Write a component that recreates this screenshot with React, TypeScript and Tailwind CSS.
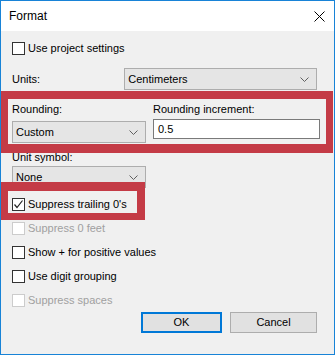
import React from "react";

const font = { fontFamily: '"Liberation Sans", Arial, sans-serif' };

function Chevron() {
  return (
    <svg width="9" height="5" viewBox="0 0 9 5" className="shrink-0">
      <polyline points="0.5,0.5 4.5,4.5 8.5,0.5" fill="none" stroke="#606060" strokeWidth="1" />
    </svg>
  );
}

function Select({ value, w }: { value: string; w: string }) {
  return (
    <div className={`${w} h-[22px] border border-[#adadad] bg-[#e5e5e5] flex items-center justify-between pl-[3px] pr-[7px]`}>
      <span className="text-[11px] text-black leading-none">{value}</span>
      <Chevron />
    </div>
  );
}

function Check({ label, checked = false, disabled = false, mt }: { label: string; checked?: boolean; disabled?: boolean; mt: string }) {
  return (
    <div className={`${mt} h-[14px] flex items-center gap-[3px]`}>
      <div className={`w-[13px] h-[13px] border ${disabled ? "border-[#cccccc]" : "border-[#333333]"} bg-white flex items-center justify-center`}>
        {checked && (
          <svg width="11" height="11" viewBox="0 0 11 11">
            <polyline points="1.5,5.5 4,8.5 9.5,1.5" fill="none" stroke="#222" strokeWidth="1.2" />
          </svg>
        )}
      </div>
      <span className={`text-[11px] leading-none ${disabled ? "text-[#a0a0a0]" : "text-black"}`}>{label}</span>
    </div>
  );
}

export default function App() {
  return (
    <div style={font} className="relative w-[335px] h-[355px] border border-[#1883d7] bg-[#f0f0f0] flex flex-col overflow-hidden">
      <div className="h-[30px] bg-white flex items-center justify-between pl-[8px] pr-[9px] shrink-0">
        <span className="text-[12px] text-black">Format</span>
        <svg width="11" height="11" viewBox="0 0 11 11">
          <line x1="0.5" y1="0.5" x2="10.5" y2="10.5" stroke="#000" strokeWidth="1" />
          <line x1="10.5" y1="0.5" x2="0.5" y2="10.5" stroke="#000" strokeWidth="1" />
        </svg>
      </div>
      <div className="flex flex-col pl-[11px] pr-[17px]">
        <Check mt="mt-[10px]" label="Use project settings" />

        <div className="mt-[13px] flex items-center">
          <span className="w-[115px] text-[11px] text-black">Units:</span>
          <Select value="Centimeters" w="w-[197px]" />
        </div>

        <div className="mt-[12px] flex gap-[7px]">
          <div className="flex flex-col w-[134px]">
            <span className="h-[14px] text-[11px] leading-[14px] text-black">Rounding:</span>
            <div className="mt-[5px]">
              <Select value="Custom" w="w-[134px]" />
            </div>
          </div>
          <div className="flex flex-col w-[167px]">
            <span className="h-[14px] text-[11px] leading-[14px] text-black">Rounding increment:</span>
            <div className="mt-[3px] w-[167px] h-[20px] border border-[#7a7a7a] bg-white flex items-center pl-[4px]">
              <span className="text-[11px] leading-none text-black">0.5</span>
            </div>
          </div>
        </div>

        <span className="mt-[7px] h-[14px] text-[11px] leading-[14px] text-black">Unit symbol:</span>
        <div className="mt-[2px]">
          <Select value="None" w="w-[134px]" />
        </div>

        <Check mt="mt-[9px]" label="Suppress trailing 0's" checked />
        <Check mt="mt-[10px]" label="Suppress 0 feet" disabled />
        <Check mt="mt-[10px]" label="Show + for positive values" />
        <Check mt="mt-[10px]" label="Use digit grouping" />
        <Check mt="mt-[10px]" label="Suppress spaces" disabled />

        <div className="mt-[5px] flex justify-end gap-[8px]">
          <div className="w-[81px] h-[21px] border-2 border-[#0078d7] bg-[#e1e1e1] flex items-center justify-center">
            <span className="text-[11px] text-black leading-none">OK</span>
          </div>
          <div className="w-[87px] h-[21px] border border-[#adadad] bg-[#e1e1e1] flex items-center justify-center">
            <span className="text-[11px] text-black leading-none">Cancel</span>
          </div>
        </div>
      </div>

      <div className="absolute left-[-1px] top-[90px] w-[333px] h-[62px] border-t-[8px] border-l-[8px] border-r-[7px] border-b-[9px] border-[#c43b46] pointer-events-none" />
      <div className="absolute left-[-1px] top-[181px] w-[145px] h-[38px] border-t-[9px] border-l-[8px] border-r-[8px] border-b-[7px] border-[#c43b46] pointer-events-none" />
    </div>
  );
}
